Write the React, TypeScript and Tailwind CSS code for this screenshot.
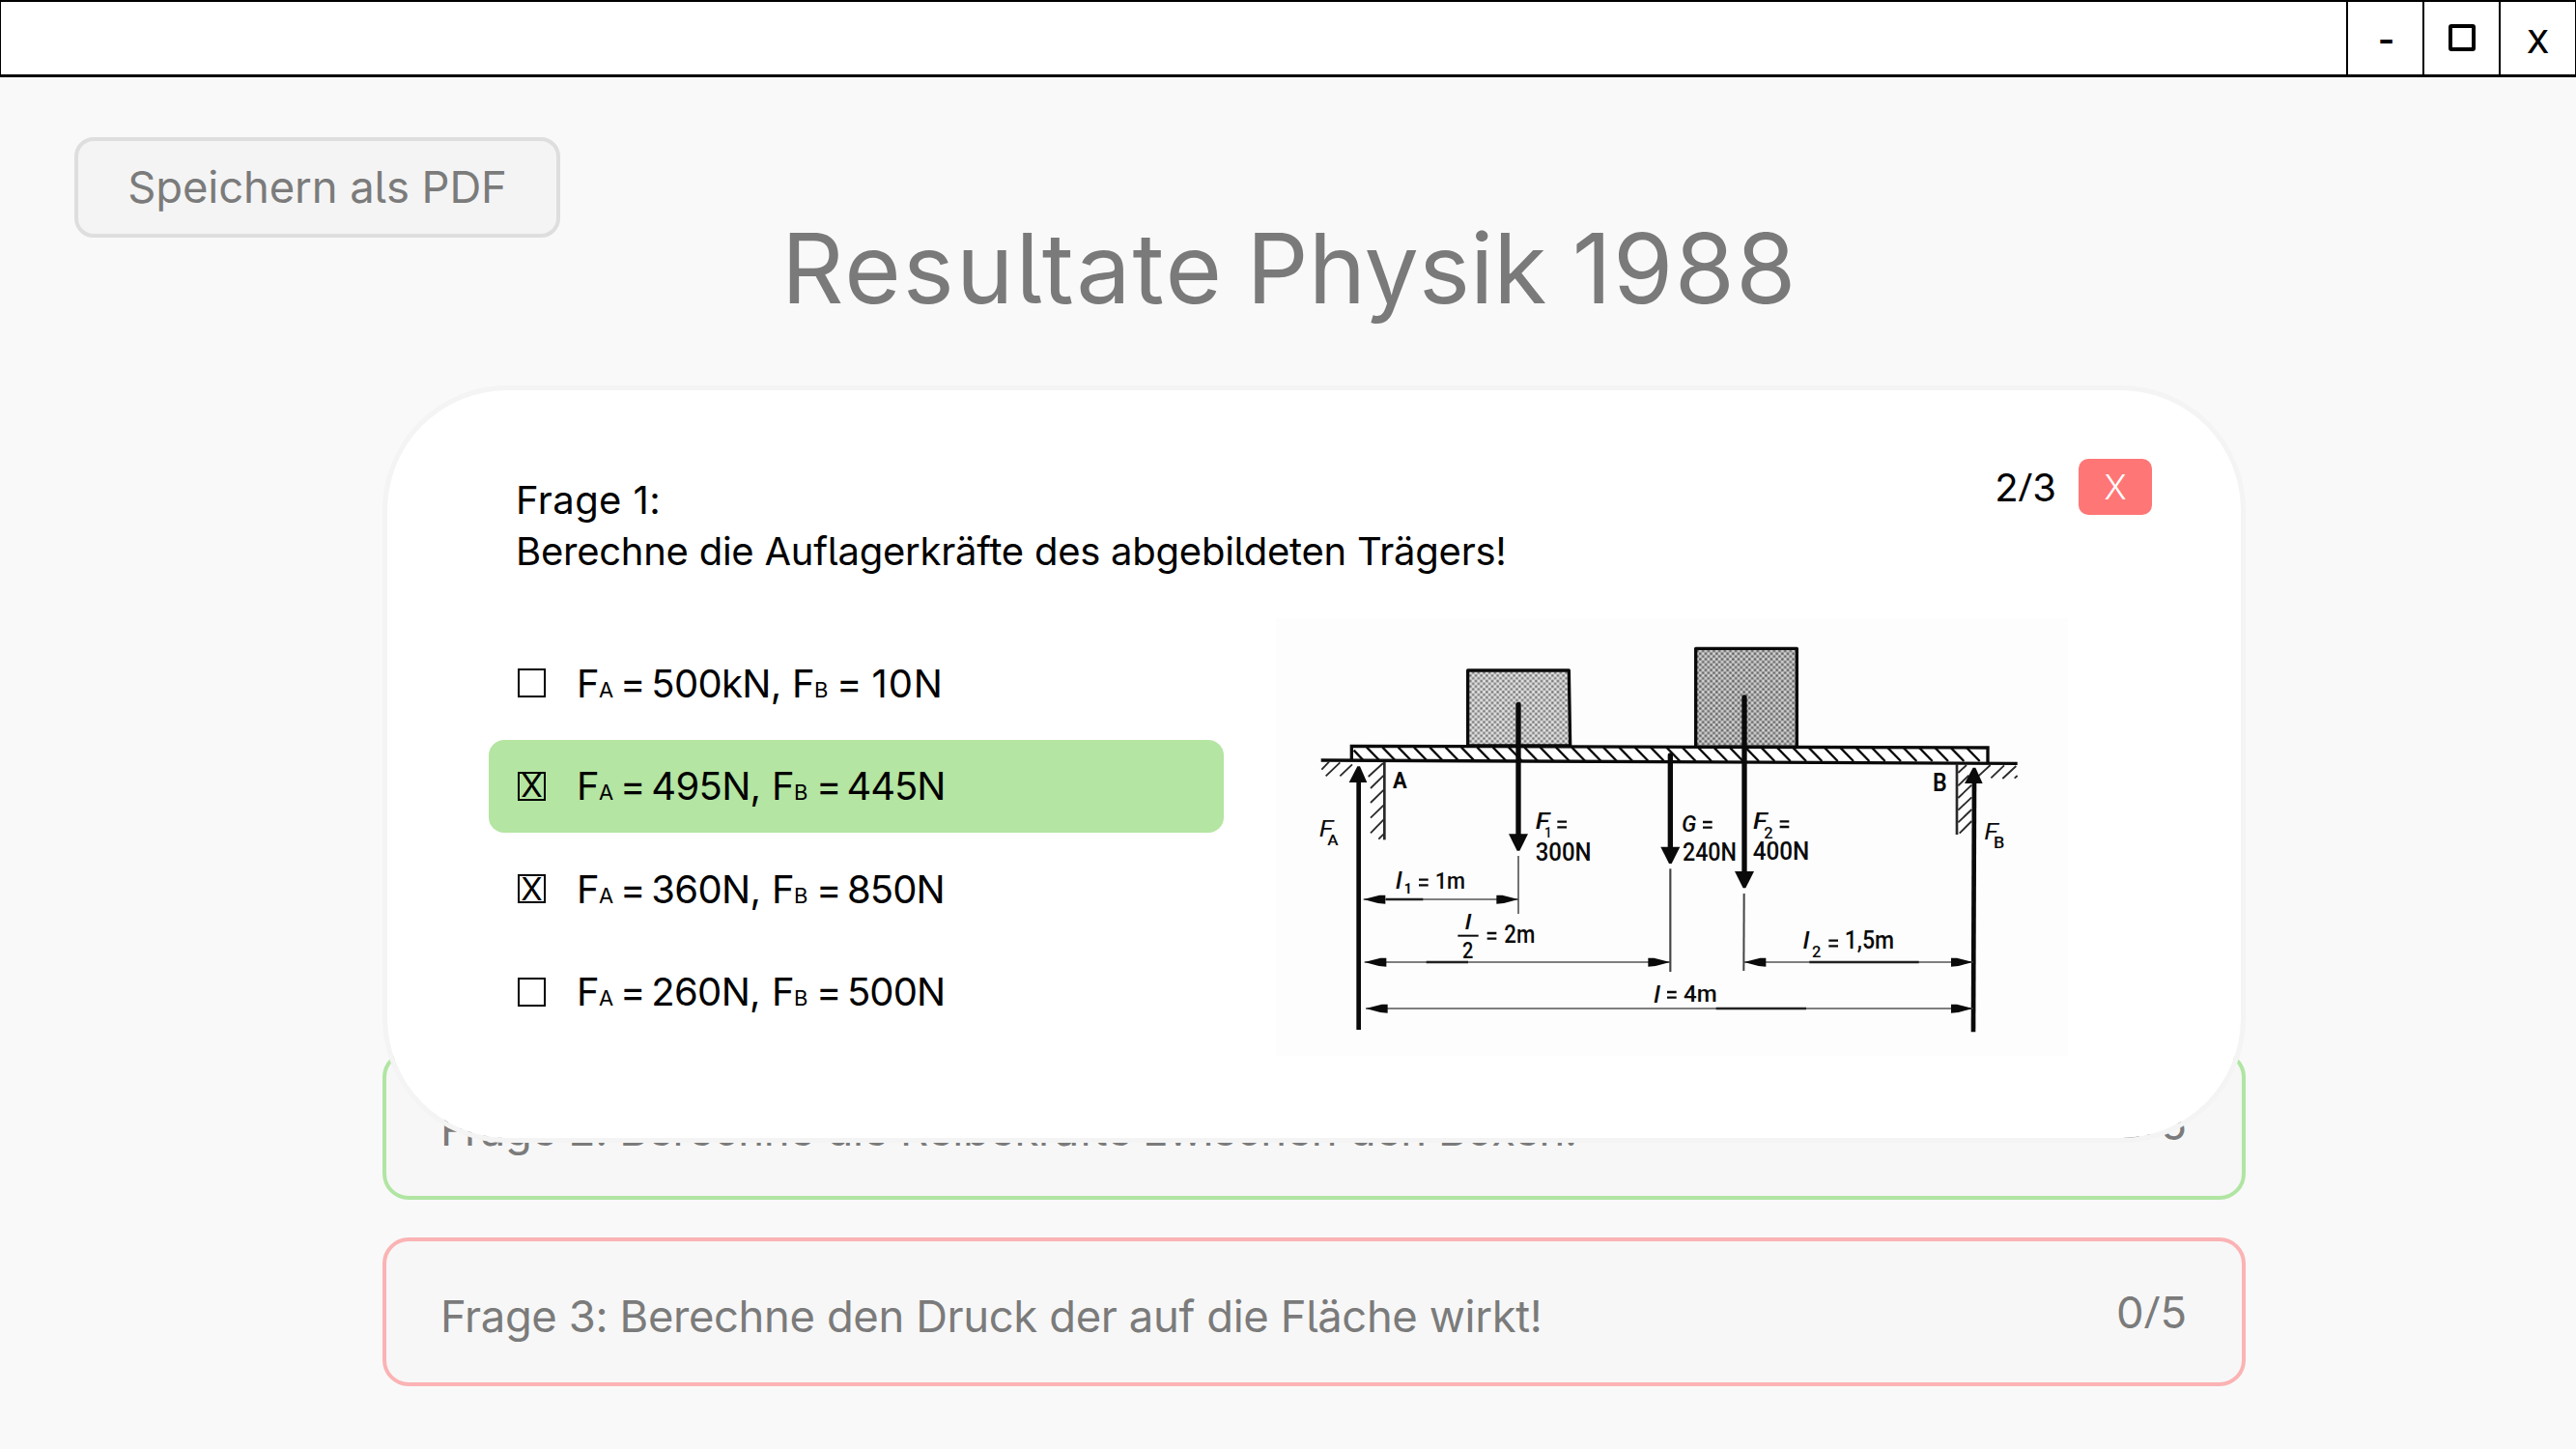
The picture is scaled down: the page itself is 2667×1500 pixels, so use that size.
import React from "react";

type Answer = { first: string; second: string; firstWidth: string; secondSpacing: string; checked?: boolean; correct?: boolean };

const answers: Answer[] = [
  { first: "= 500kN,", second: "= 10N", firstWidth: "w-[178px]", secondSpacing: "tracking-[0.9px] [word-spacing:-3px]" },
  { first: "= 495N,", second: "= 445N", firstWidth: "w-[157px]", secondSpacing: "tracking-[-1.1px] [word-spacing:-4px]", checked: true, correct: true },
  { first: "= 360N,", second: "= 850N", firstWidth: "w-[157px]", secondSpacing: "tracking-[-0.9px] [word-spacing:-4px]", checked: true },
  { first: "= 260N,", second: "= 500N", firstWidth: "w-[157px]", secondSpacing: "tracking-[-0.9px] [word-spacing:-4px]" },
];

function TitleBar() {
  return (
    <header className="flex h-[80px] w-full shrink-0 border-t-2 border-b-3 border-l-1 border-black bg-white text-black">
      <div className="flex-1" />
      <div className="flex w-[79px] items-center justify-center border-l-2 border-black">
        <span className="pt-[3px] pl-[2px] text-[38px] leading-none font-semibold">-</span>
      </div>
      <div className="flex w-[79px] items-center justify-center border-l-2 border-black">
        <span className="mb-[1px] h-[28px] w-[28px] rounded-[3px] border-4 border-black" />
      </div>
      <div className="flex w-[80px] items-center justify-center border-l-2 border-r-1 border-black">
        <span className="pt-[7px] text-[33px] leading-none font-medium">X</span>
      </div>
    </header>
  );
}

function Checkbox({ checked }: { checked?: boolean }) {
  return (
    <span className="flex h-[30px] w-[29px] items-center justify-center border-2 border-black">
      {checked && <span className="text-[33px] leading-none tracking-normal">X</span>}
    </span>
  );
}

function AnswerRow({ a }: { a: Answer }) {
  return (
    <li className={`flex h-[96px] w-[761px] items-center rounded-[16px] pl-[30px] ${a.correct ? "bg-[#b4e5a2]" : ""}`}>
      <Checkbox checked={a.checked} />
      <div className="ml-[32px] flex items-baseline pt-[1px] text-[40px] leading-none whitespace-nowrap">
        <span className="w-[23px]">F</span>
        <span className="w-[22px] text-[22px]">A</span>
        <span className={`tracking-[-0.7px] [word-spacing:-4px] ${a.firstWidth}`}>{a.first}</span>
        <span className="w-[23px]">F</span>
        <span className="w-[23px] text-[22px]">B</span>
        <span className={a.secondSpacing}>{a.second}</span>
      </div>
    </li>
  );
}

function Score({ points, total }: { points: number; total: number }) {
  return (
    <>
      {points}
      <span className="font-['Open_Sans',sans-serif]">/</span>
      {total}
    </>
  );
}

function T({ x, y, w, cap, children, italic, weight = 500 }: { x: number; y: number; w: number; cap: number; children: string; italic?: boolean; weight?: number }) {
  return (
    <text
      x={x - 3}
      y={y}
      fontSize={cap / 0.711}
      textLength={w + 6}
      lengthAdjust="spacingAndGlyphs"
      fontStyle={italic ? "italic" : "normal"}
      fontWeight={weight}
    >
      {children}
    </text>
  );
}

function DownArrow({ x, from, base, tip }: { x: number; from: number; base: number; tip: number }) {
  return (
    <g>
      <line x1={x} y1={from} x2={x} y2={base + 5} strokeWidth="16" strokeLinecap="round" />
      <polygon points={`${x - 30},${base} ${x + 30},${base} ${x + 4},${tip} ${x - 4},${tip}`} stroke="none" />
    </g>
  );
}

function Dimension({ y, from, to, bold }: { y: number; from: number; to: number; bold: [number, number] }) {
  return (
    <g>
      <line x1={from} y1={y} x2={to} y2={y} strokeWidth="5" stroke="#555" />
      <line x1={bold[0]} y1={y} x2={bold[1]} y2={y} strokeWidth="7" stroke="#222" />
      <path
        stroke="none"
        d={`M${from} ${y} L${from + 50} ${y - 13} L${from + 68} ${y - 13} V${y + 14} L${from + 45} ${y + 12} Z M${to} ${y} L${to - 50} ${y - 13} L${to - 68} ${y - 13} V${y + 14} L${to - 45} ${y + 12} Z`}
      />
    </g>
  );
}

function Equals({ x, y }: { x: number; y: number }) {
  return <path d={`M${x} ${y - 8} h29 M${x} ${y + 9} h29`} strokeWidth="7" />;
}

const beamHatch = Array.from({ length: 39 }, (_, i) => 345 + i * 49);

function BeamDiagram() {
  return (
    <svg className="h-[453px] w-[820px] bg-[#fdfdfd]" viewBox="63 30 2460 1359" fill="#0a0a0a" stroke="#0a0a0a" fontFamily="Roboto, sans-serif">
      <defs>
        <pattern id="dots" width="17" height="17" patternUnits="userSpaceOnUse">
          <rect width="17" height="17" fill="#c2c2c2" stroke="none" />
          <circle cx="4" cy="4" r="3.4" fill="#6a6a6a" stroke="none" />
          <circle cx="12.5" cy="12.5" r="3.4" fill="#747474" stroke="none" />
          <circle cx="12.5" cy="4" r="3.4" fill="#efefef" stroke="none" />
          <circle cx="4" cy="12.5" r="3.4" fill="#e8e8e8" stroke="none" />
        </pattern>
        <pattern id="dotsDense" width="17" height="17" patternUnits="userSpaceOnUse">
          <rect width="17" height="17" fill="#b0b0b0" stroke="none" />
          <circle cx="4" cy="4" r="3.6" fill="#5a5a5a" stroke="none" />
          <circle cx="12.5" cy="12.5" r="3.6" fill="#666" stroke="none" />
          <circle cx="12.5" cy="4" r="3.2" fill="#e4e4e4" stroke="none" />
          <circle cx="4" cy="12.5" r="3.2" fill="#dadada" stroke="none" />
        </pattern>
      </defs>

      <g strokeWidth="10" strokeLinejoin="round">
        <path d="M659 426 V192 H973 L977 426 Z" fill="url(#dots)" />
        <path d="M1367 430 V124 H1681 V430 Z" fill="url(#dotsDense)" />
      </g>

      <path d="M298 474 V427 L2274 432 V479" fill="#fff" strokeWidth="10" />
      <path d="M203 471 L2366 481" strokeWidth="10" />
      <g strokeWidth="7">
        {beamHatch.map((x) => (
          <line key={x} x1={x} y1={431} x2={x + 42} y2={474} />
        ))}
        <path d="M305 440 L335 472" />
      </g>

      <g strokeWidth="5.5" stroke="#2a2a2a">
        <path d="M400 476 V718" strokeWidth="8" />
        <path d="M205 500 L228 476 M218 520 L262 478 M262 520 L300 484 M350 522 L396 480" />
        <path d="M357 558 L398 518 M357 603 L398 563 M357 650 L398 610 M357 697 L398 655 M382 716 L398 700" />
        <path d="M2178 482 V702" strokeWidth="8" />
        <path d="M2182 510 L2208 486 M2182 550 L2215 518 M2182 588 L2224 548 M2182 626 L2224 586 M2182 664 L2224 624 M2186 698 L2224 660" />
        <path d="M2245 520 L2282 486 M2284 526 L2325 487 M2320 528 L2362 489 M2357 527 L2366 519" />
      </g>

      <DownArrow x={816} from={298} base={700} tip={752} />
      <DownArrow x={1288} from={456} base={740} tip={792} />
      <DownArrow x={1518} from={276} base={816} tip={868} />
      <g>
        <line x1="320" y1="530" x2="320" y2="1308" strokeWidth="14" />
        <polygon points="290,540 316,490 324,490 346,540" stroke="none" />
        <line x1="2232" y1="530" x2="2229" y2="1315" strokeWidth="14" />
        <polygon points="2202,543 2228,494 2236,494 2258,543" stroke="none" />
      </g>
      <g stroke="#444">
        <line x1="816" y1="768" x2="816" y2="948" strokeWidth="4.5" />
        <line x1="1288" y1="808" x2="1288" y2="1128" strokeWidth="6.5" />
        <line x1="1517" y1="885" x2="1516" y2="1125" strokeWidth="6" />
      </g>
      <Dimension y={903} from={335} to={816} bold={[405, 520]} />
      <Dimension y={1098} from={338} to={1287} bold={[530, 660]} />
      <Dimension y={1098} from={1517} to={2228} bold={[1720, 2060]} />
      <Dimension y={1242} from={342} to={2228} bold={[1430, 1710]} />

      <g stroke="none">
        <T x={429} y={558} w={38} cap={50} weight={700}>A</T>
        <T x={2106} y={566} w={38} cap={55} weight={600}>B</T>
        <T x={200} y={708} w={38} cap={50} italic weight={400}>F</T>
        <T x={226} y={735} w={28} cap={33}>A</T>
        <T x={2266} y={717} w={38} cap={50} italic weight={400}>F</T>
        <T x={2295} y={744} w={28} cap={36}>B</T>
        <T x={872} y={685} w={38} cap={50} italic>F</T>
        <T x={900} y={712} w={17} cap={32}>1</T>
        <T x={872} y={783} w={168} cap={54} weight={500}>300N</T>
        <T x={1326} y={692} w={40} cap={52} italic>G</T>
        <T x={1329} y={782} w={162} cap={54}>240N</T>
        <T x={1548} y={685} w={38} cap={50} italic>F</T>
        <T x={1582} y={715} w={22} cap={35}>2</T>
        <T x={1547} y={780} w={170} cap={54}>400N</T>
        <T x={464} y={885} w={18} cap={32} weight={700}>1</T>
        <T x={560} y={870} w={88} cap={52}>1m</T>
        <T x={645} y={1086} w={28} cap={52}>2</T>
        <T x={775} y={1038} w={90} cap={55}>2m</T>
        <T x={1332} y={1220} w={98} cap={50}>4m</T>
        <T x={1731} y={1082} w={22} cap={36}>2</T>
        <T x={1832} y={1056} w={148} cap={54}>1,5m</T>
        <T x={438} y={870} w={13} cap={50} italic weight={500}>l</T>
        <T x={653} y={996} w={13} cap={46} italic weight={500}>l</T>
        <T x={1240} y={1223} w={13} cap={50} italic weight={500}>l</T>
        <T x={1703} y={1056} w={13} cap={50} italic weight={500}>l</T>
      </g>
      <Equals x={937} y={670} />
      <Equals x={1389} y={671} />
      <Equals x={1628} y={669} />
      <Equals x={507} y={850} />
      <Equals x={719} y={1016} />
      <Equals x={1278} y={1199} />
      <Equals x={1780} y={1039} />
      <path d="M628 1016 H692" strokeWidth="6" />
    </svg>
  );
}

function QuestionModal() {
  return (
    <section className="relative z-10 ml-[396px] h-[784px] w-[1929px] rounded-[129px] border-[5px] border-[#f4f4f4] bg-white bg-clip-padding">
      <div className="flex justify-between pt-[71px] pr-[92px] pl-[133px]">
        <div className="pt-[16px] pb-[1px] text-[40px] leading-[53px] whitespace-nowrap text-black">
          <p className="tracking-[0.4px]">Frage 1:</p>
          <p className="tracking-[-0.25px]">Berechne die Auflagerkräfte des abgebildeten Trägers!</p>
        </div>
        <div className="flex h-[58px] items-center">
          <span className="mr-[23px] text-[40px] leading-none text-black">
            <Score points={2} total={3} />
          </span>
          <button className="flex h-[58px] w-[76px] items-center justify-center rounded-[10px] bg-[#ff7676] text-[35px] leading-none font-light text-white">X</button>
        </div>
      </div>
      <div className="flex">
        <ul className="mt-[61px] ml-[105px] flex flex-col gap-[10.67px] text-black">
          {answers.map((a) => (
            <AnswerRow key={a.first} a={a} />
          ))}
        </ul>
        <div className="mt-[42px] ml-[54px]">
          <BeamDiagram />
        </div>
      </div>
    </section>
  );
}

function QuestionCard({ tone, text, points, scoreInset }: { tone: string; text: string; points: number; scoreInset: string }) {
  return (
    <div className={`flex h-[154px] w-[1929px] items-center justify-between rounded-[27px] border-4 bg-[#f7f7f7] pr-[57px] pl-[56px] text-[45.4px] leading-none whitespace-nowrap text-[#7b7b7b] ${tone}`}>
      <span className="pt-[9px] tracking-[-0.38px]">{text}</span>
      <span className={scoreInset}>
        <Score points={points} total={5} />
      </span>
    </div>
  );
}

export default function App() {
  return (
    <div className="flex h-[1500px] w-full flex-col overflow-hidden bg-[#f9f9f9] font-['Inter',sans-serif] [font-feature-settings:'cv05']">
      <TitleBar />
      <button className="mt-[62px] ml-[77px] flex h-[104px] w-[503px] shrink-0 items-center justify-center rounded-[20px] border-4 border-[#dedede] bg-[#f4f4f4] text-[45.4px] leading-none tracking-[-0.1px] text-[#7b7b7b]">
        Speichern als PDF
      </button>
      <h1 className="-mt-[28px] ml-[809px] h-[119px] shrink-0 text-[100.4px] leading-[119px] [word-spacing:-7px] whitespace-nowrap text-[#7a7a7a]">
        <span className="tracking-[2.1px]">Resultate </span>
        <span>Physik </span>
        <span className="ml-[5px] tracking-[1.5px]">1988</span>
      </h1>
      <div className="mt-[62px] shrink-0">
        <QuestionModal />
      </div>
      <div className="-mt-[95px] ml-[396px] flex shrink-0 flex-col gap-[39px]">
        <QuestionCard tone="border-[#b0e5a2]" text="Frage 2: Berechne die Reibekräfte zwischen den Boxen!" points={5} scoreInset="pb-[3px]" />
        <QuestionCard tone="border-[#fbb3b4]" text="Frage 3: Berechne den Druck der auf die Fläche wirkt!" points={0} scoreInset="pt-[1px]" />
      </div>
    </div>
  );
}
